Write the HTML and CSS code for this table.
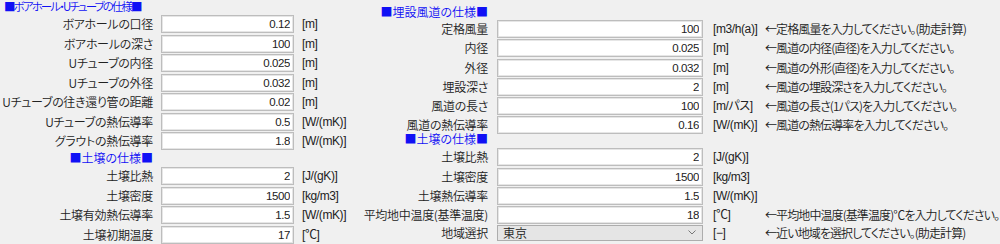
FILE: index.html
```html
<!DOCTYPE html>
<html lang="ja">
<head>
<meta charset="utf-8">
<title>仕様入力</title>
<link rel="stylesheet" href="styles.css">
</head>
<body>
<div class="form">
  <section class="left">
    <div class="title">■ボアホール・Uチューブの仕様■</div>
    <div class="row"><label class="lbl">ボアホールの口径</label><input class="box" value="0.12"><span class="unit">[m]</span></div>
    <div class="row"><label class="lbl">ボアホールの深さ</label><input class="box" value="100"><span class="unit">[m]</span></div>
    <div class="row"><label class="lbl">Uチューブの内径</label><input class="box" value="0.025"><span class="unit">[m]</span></div>
    <div class="row"><label class="lbl">Uチューブの外径</label><input class="box" value="0.032"><span class="unit">[m]</span></div>
    <div class="row"><label class="lbl">Uチューブの往き還り管の距離</label><input class="box" value="0.02"><span class="unit">[m]</span></div>
    <div class="row"><label class="lbl">Uチューブの熱伝導率</label><input class="box" value="0.5"><span class="unit">[W/(mK)]</span></div>
    <div class="row"><label class="lbl">グラウトの熱伝導率</label><input class="box" value="1.8"><span class="unit">[W/(mK)]</span></div>
    <div class="subhead">■土壌の仕様■</div>
    <div class="row"><label class="lbl">土壌比熱</label><input class="box" value="2"><span class="unit">[J/(gK)]</span></div>
    <div class="row"><label class="lbl">土壌密度</label><input class="box" value="1500"><span class="unit">[kg/m3]</span></div>
    <div class="row"><label class="lbl">土壌有効熱伝導率</label><input class="box" value="1.5"><span class="unit">[W/(mK)]</span></div>
    <div class="row"><label class="lbl">土壌初期温度</label><input class="box" value="17"><span class="unit">[℃]</span></div>
  </section>
  <section class="right">
    <div class="head">■埋設風道の仕様■</div>
    <div class="row"><label class="lbl">定格風量</label><input class="box" value="100"><span class="unit">[m3/h(a)]</span><span class="note">←定格風量を入力してください。(助走計算)</span></div>
    <div class="row"><label class="lbl">内径</label><input class="box" value="0.025"><span class="unit">[m]</span><span class="note">←風道の内径(直径)を入力してください。</span></div>
    <div class="row"><label class="lbl">外径</label><input class="box" value="0.032"><span class="unit">[m]</span><span class="note">←風道の外形(直径)を入力してください。</span></div>
    <div class="row"><label class="lbl">埋設深さ</label><input class="box" value="2"><span class="unit">[m]</span><span class="note">←風道の埋設深さを入力してください。</span></div>
    <div class="row"><label class="lbl">風道の長さ</label><input class="box" value="100"><span class="unit">[m/パス]</span><span class="note">←風道の長さ(1パス)を入力してください。</span></div>
    <div class="row"><label class="lbl">風道の熱伝導率</label><input class="box" value="0.16"><span class="unit">[W/(mK)]</span><span class="note">←風道の熱伝導率を入力してください。</span></div>
    <div class="subhead">■土壌の仕様■</div>
    <div class="row"><label class="lbl">土壌比熱</label><input class="box" value="2"><span class="unit">[J/(gK)]</span></div>
    <div class="row"><label class="lbl">土壌密度</label><input class="box" value="1500"><span class="unit">[kg/m3]</span></div>
    <div class="row"><label class="lbl">土壌熱伝導率</label><input class="box" value="1.5"><span class="unit">[W/(mK)]</span></div>
    <div class="row"><label class="lbl">平均地中温度(基準温度)</label><input class="box" value="18"><span class="unit">[℃]</span><span class="note">←平均地中温度(基準温度)℃を入力してください。</span></div>
    <div class="row sel-row"><label class="lbl">地域選択</label>
      <div class="select"><span>東京</span><svg class="chev" width="8" height="5" viewBox="0 0 8 5"><path d="M0.5 0.5 L4 4 L7.5 0.5" fill="none" stroke="#777" stroke-width="1"/></svg></div>
      <span class="unit">[−]</span><span class="note">←近い地域を選択してください。(助走計算)</span></div>
  </section>
</div>
</body>
</html>
```
FILE: styles.css
```css
html, body {
  margin: 0;
  padding: 0;
}
body {
  width: 1000px;
  height: 244px;
  overflow: hidden;
  background: #f0f0f0;
  color: #222;
  font-family: "Noto Sans CJK JP", sans-serif;
  font-weight: 350;
  font-size: 12px;
  font-feature-settings: "palt";
}
.form {
  display: flex;
}
.left {
  width: 350px;
  flex: none;
}
.right {
  flex: 1;
}
.title {
  height: 15px;
  line-height: 13px;
  padding-left: 4px;
  color: #1010f5;
  white-space: nowrap;
  font-size: 11.5px;
  letter-spacing: -1.9px;
}
.row {
  display: flex;
  align-items: flex-start;
  white-space: nowrap;
}
.left .row {
  height: 19.5px;
}
.right .row {
  height: 19.3px;
}
.lbl {
  line-height: 18px;
  text-align: right;
  flex: none;
  letter-spacing: -0.3px;
}
.box {
  box-sizing: border-box;
  height: 18px;
  margin: 0;
  padding: 0 3px 0 3px;
  border: 1px solid #bdbdbd;
  box-shadow: inset 0 0 0 1px #e6e6e6;
  background: #fff;
  text-align: right;
  font-family: "Liberation Sans", sans-serif;
  font-size: 11.5px;
  letter-spacing: -0.4px;
  color: #222;
  outline: none;
  flex: none;
}
.unit {
  line-height: 18px;
  flex: none;
  font-family: "Liberation Sans", "Noto Sans CJK JP", sans-serif;
  font-weight: 400;
  font-size: 12px;
  letter-spacing: -0.4px;
}
.left .lbl {
  width: 153px;
}
.left .box {
  margin-left: 8px;
  width: 133px;
}
.left .unit {
  margin-left: 8px;
}
.left .subhead {
  width: 153px;
  height: 15.5px;
  line-height: 11px;
  text-align: right;
  color: #1010f5;
}
.right .head {
  box-sizing: border-box;
  width: 138px;
  height: 20px;
  padding-top: 6px;
  line-height: 12px;
  text-align: right;
  color: #1010f5;
  white-space: nowrap;
}
.right .subhead {
  width: 138px;
  height: 14.3px;
  margin-top: -1.8px;
  line-height: 10px;
  text-align: right;
  color: #1010f5;
}
.right .lbl {
  width: 138px;
}
.right .box,
.select {
  margin-left: 9px;
  width: 206px;
}
.right .unit {
  margin-left: 10px;
  width: 52px;
}
.note {
  line-height: 18px;
  letter-spacing: -0.9px;
}
.sel-row {
  margin-top: -1.5px;
}
.select {
  box-sizing: border-box;
  height: 16px;
  border: 1px solid #adadad;
  background: #e5e5e5;
  display: flex;
  align-items: center;
  justify-content: space-between;
  padding: 0 5px 0 5px;
  flex: none;
  margin-top: 1px;
  line-height: 14px;
}
.chev {
  display: block;
  margin-right: 1px;
}
```
